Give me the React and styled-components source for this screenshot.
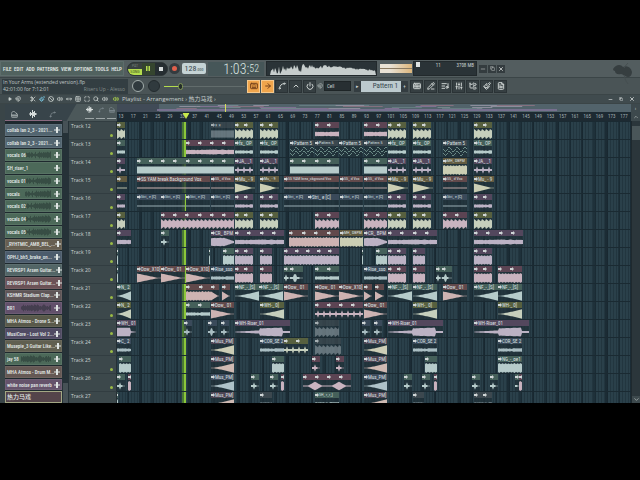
import { useMemo } from 'react';
import styled, { createGlobalStyle } from 'styled-components';
import {
  ArrowRight,
  Ban,
  ChevronDown,
  ChevronUp,
  Copy,
  FileText,
  FolderTree,
  Grid2x2,
  Keyboard,
  KeyboardMusic,
  ListMusic,
  Magnet,
  Maximize,
  Minus,
  MoveHorizontal,
  Paintbrush,
  PencilLine,
  Piano,
  Play,
  Power,
  Scissors,
  Search,
  SlidersVertical,
  Spline,
  Volume2,
  X,
} from 'lucide-react';

const COLORS = {
  chrome: '#4b5557',
  chromeDark: '#3a4548',
  grid: '#2a404a',
  text: '#ccd4d3',
  orange: '#f0a54c',
  lime: '#b4dc4e',
};

const UI_FONT = `'Roboto Condensed', 'Open Sans Condensed', Roboto, 'Noto Sans CJK SC', sans-serif`;

const GlobalStyle = createGlobalStyle`
  * {
    box-sizing: border-box;
  }
  body {
    margin: 0;
    background: #000;
    color: ${COLORS.text};
    font-family: ${UI_FONT};
    font-size: 5px;
    line-height: 8px;
    overflow: hidden;
  }
  button, input, select {
    margin: 0;
    padding: 0;
    border: 0;
    background: none;
    color: inherit;
    font: inherit;
  }
  svg {
    display: block;
    flex: none;
  }
`;

/* ---------- frame ---------- */

const Page = styled.div`
  min-height: 100vh;
  padding: 60px 0;
`;
const Bar = styled.div`
  display: flex;
  align-items: center;
  height: ${(p) => p.$height}px;
  background: ${(p) => p.$bg || COLORS.chrome};
  border-bottom: 1px solid #3b4547;
  white-space: nowrap;
`;
const Spacer = styled.div`
  flex: 1;
`;

/* ---------- top toolbar ---------- */

const Menu = styled.nav`
  display: flex;
  align-items: center;
  justify-content: space-between;
  width: 124px;
  height: 15px;
  padding: 0 1px 0 2px;
  background: #51625f;
  border: 1px solid #5d6d6b;
  font-weight: 500;
  color: #e8efec;
`;
const Transport = styled.div`
  display: flex;
  width: 41px;
  height: 14px;
  margin-left: 3px;
  border-radius: 7px;
  overflow: hidden;
  background: #242b2e;
  border: 1px solid #2f3739;
`;
const ModeSwitch = styled.button`
  width: 14px;
  display: flex;
  flex-direction: column;
  font-size: 4px;
  line-height: 6px;
  background: #39413f;
  color: #727b76;
`;
const SongLabel = styled.span`
  background: ${COLORS.lime};
  color: #3c4e25;
`;
const TransportButton = styled.button`
  flex: 1;
  display: flex;
  align-items: center;
  justify-content: center;
  background: ${(p) => (p.$active ? '#35452f' : '#262e32')};
  color: ${(p) => (p.$active ? COLORS.lime : '#d6dbdc')};
`;
const RecordButton = styled.button`
  width: 11px;
  height: 11px;
  margin: 0 2px 0 1px;
  border-radius: 50%;
  background: #e0604c;
  border: 3px solid #343b3f;
`;
const Tempo = styled.output`
  width: 24px;
  height: 11px;
  background: #c5d3d5;
  border-radius: 2px;
  color: #36464b;
  font-size: 8px;
  line-height: 11px;
  text-align: center;
  small {
    font-size: 4px;
  }
`;
const Clock = styled.output`
  width: 56px;
  height: 14px;
  margin: 0 2px;
  padding-right: 5px;
  background: #465658;
  display: flex;
  justify-content: flex-end;
  align-items: center;
  color: #dde6e2;
  font-size: 14px;
  font-weight: 300;
  small {
    font-size: 10px;
  }
`;
const Display = styled.div`
  width: ${(p) => p.$width}px;
  height: 15px;
  margin-right: 2px;
  background: #2a3337;
  border: 1px solid #22292c;
`;
const Meter = styled.div`
  width: 32px;
  height: 9px;
  margin: 0 1px;
  display: flex;
  flex-direction: column;
  gap: 1px;
  background: #8b7b62;
`;
const MeterBar = styled.div`
  flex: 1;
  background: linear-gradient(90deg, #e9e2d5 30%, #dcb67c);
`;
const Cpu = styled(Display)`
  display: flex;
  justify-content: space-between;
  padding: 0 2px;
  line-height: 7px;
`;
const WindowButton = styled.button`
  width: 8px;
  height: 8px;
  margin-right: ${(p) => (p.$plain ? 0 : 1)}px;
  display: flex;
  align-items: center;
  justify-content: center;
  background: ${(p) => (p.$plain ? 'none' : '#343c3f')};
  color: #dde1e0;
`;
const HintPanel = styled.div`
  width: 126px;
  height: 15px;
  margin-left: 2px;
  padding: 0 3px 0 1px;
  background: #333e42;
  color: #c0c8c7;
  font: 5px/7px 'Open Sans', sans-serif;
`;
const HintLine = styled.div`
  display: flex;
  justify-content: space-between;
  em {
    font-style: normal;
    color: #838d8c;
  }
`;
const Knob = styled.button`
  width: 12px;
  height: 12px;
  margin-left: 4px;
  border-radius: 50%;
  background: #303a3e;
  border: 1px solid ${(p) => (p.$lit ? '#a2adab' : '#232b2e')};
`;
const Pitch = styled.input`
  appearance: none;
  width: 81px;
  height: 12px;
  margin: 0 2px 0 4px;
  background: linear-gradient(90deg, ${COLORS.lime} 14px, #626c6c 14px) center / 100% 1px no-repeat;
  &::-webkit-slider-thumb {
    appearance: none;
    width: 5px;
    height: 7px;
    border-radius: 3px;
    background: #242d29;
    border: 1px solid #7f9557;
  }
`;
const ToolButton = styled.button`
  width: 13px;
  height: 13px;
  margin-right: 1px;
  display: flex;
  align-items: center;
  justify-content: center;
  background: ${(p) => (p.$on ? COLORS.orange : '#363f42')};
  border: 1px solid ${(p) => (p.$on ? '#f7c98c' : '#2b3336')};
  color: ${(p) => (p.$on ? '#73401a' : '#ccd2d1')};
`;
const SnapSelect = styled.select`
  appearance: none;
  width: 27px;
  height: 10px;
  margin: 0 3px 0 1px;
  padding-left: 2px;
  background: #272f32;
  border: 1px solid #1e2527;
`;
const PatternSelect = styled.select`
  appearance: none;
  width: 40px;
  height: 11px;
  padding: 0 3px 0 2px;
  background: #bccace;
  color: #33444a;
  font-size: 7px;
  text-align-last: right;
`;
const PatternStep = styled.button`
  width: 7px;
  height: 11px;
  background: #343d41;
`;
const Windows = styled.div`
  display: flex;
  margin-left: 2px;
`;
const Logo = styled.svg`
  position: relative;
  z-index: 1;
  width: 24px;
  height: 28px;
  margin: 3px 6px 0 0;
  align-self: flex-start;
  fill: #363e40;
`;

/* ---------- playlist ---------- */

const TitleBar = styled(Bar)`
  gap: 3px;
  padding: 0 4px 0 8px;
  color: #c9d0ce;
  svg {
    stroke-width: 3;
  }
`;
const ToolGroup = styled.div`
  display: flex;
  gap: 3px;
  margin: 0 2px 0 6px;
`;
const Title = styled.h1`
  margin: 0;
  font: 400 6px/8px 'Open Sans', 'Noto Sans CJK SC', sans-serif;
`;
const Workspace = styled.main`
  display: grid;
  grid-template-columns: 57px 7px 48px minmax(0, 1fr) 9px;
  grid-template-rows: 8px 9px auto;
  padding-left: 5px;
  background: ${COLORS.chromeDark};
`;
const PickerTabs = styled.div`
  grid-row: 1 / 3;
  display: flex;
  align-items: center;
  justify-content: space-around;
  padding-top: 4px;
  background: #38444a;
  border-bottom: 1px solid #8b6b80;
`;
const TrackTools = styled.div`
  grid-row: 1 / 3;
  grid-column: 2 / 4;
  display: grid;
  grid-template-columns: repeat(3, 11px);
  align-items: center;
  justify-content: end;
  padding-left: 12px;
  background: linear-gradient(120deg, #38444a 12px, #4c585a 13px);
  svg {
    justify-self: center;
  }
`;
const Slider = styled.i`
  height: 1px;
  background: #9da6a6;
  margin: 0 1px;
`;
const ScrollCap = styled.button`
  display: flex;
  align-items: center;
  justify-content: center;
  background: #3d494d;
`;
const Ruler = styled.div`
  position: relative;
  background: #1d2a32;
  overflow: hidden;
`;
const BarNumber = styled.span`
  position: absolute;
  top: 1px;
  transform: translateX(-50%);
  line-height: 7px;
  color: #a5b1b5;
`;
const Marker = styled.svg`
  position: absolute;
  top: 1px;
  transform: translateX(-50%);
  fill: #c9ea4c;
`;
const Picker = styled.div`
  display: flex;
  flex-direction: column;
  gap: 1px;
  padding-top: 3px;
  background: #1e292e;
`;
const PickerItem = styled.button`
  position: relative;
  flex: 1;
  min-height: 0;
  display: flex;
  align-items: center;
  padding: 0 1px;
  background: ${(p) => p.$color};
  border: 1px solid ${(p) => (p.$selected ? '#a3a784' : 'rgba(255, 255, 255, 0.07)')};
  color: #e2e9e7;
  text-align: left;
  font-size: ${(p) => (p.$selected ? 6 : 5)}px;
  font-weight: 500;
`;
const PickerName = styled.span`
  position: relative;
  flex: 1;
  white-space: nowrap;
`;
const PickerWave = styled.svg`
  position: absolute;
  top: 1px;
  right: 10px;
  fill: rgba(25, 36, 38, 0.4);
`;
const PickerScroll = styled.div`
  display: flex;
  flex-direction: column;
  justify-content: space-between;
  align-items: center;
  background: #263238;
  &::before,
  &::after {
    content: '';
    width: 5px;
    height: 12px;
    background: #465156;
  }
  &::after {
    height: 20px;
  }
`;
const TrackHead = styled.div`
  height: ${(p) => p.$height}px;
  padding: 0 3px 0 2px;
  display: flex;
  justify-content: space-between;
  overflow: hidden;
  background: #3c484b;
  border-top: 1px solid #323d41;
  border-right: 1px solid #252f34;
  font-family: 'Open Sans', sans-serif;
`;
const Led = styled.i`
  width: 3px;
  height: 3px;
  margin-top: 12px;
  border-radius: 50%;
  background: #9aba45;
`;
const Lanes = styled.div`
  position: relative;
  overflow: hidden;
  background:
    repeating-linear-gradient(90deg, transparent 0 4.3%, rgba(20, 33, 41, 0.3) 4.3% 4.775%),
    repeating-linear-gradient(90deg, transparent 0 1.9%, rgba(13, 26, 34, 0.4) 1.9% 2.3875%),
    repeating-linear-gradient(90deg, transparent 0 0.4%, rgba(16, 30, 38, 0.3) 0.4% 0.5969%),
    ${COLORS.grid};
`;
const Playhead = styled.div`
  position: absolute;
  top: 0;
  bottom: 0;
  width: 4px;
  background: linear-gradient(90deg, #4b7a35 50%, #8cc63b 50%);
`;
const Lane = styled.div`
  position: relative;
  height: ${(p) => p.$height}px;
  border-top: 1px solid #1a2a32;
  overflow: hidden;
`;
const Clip = styled.div`
  position: absolute;
  top: 0;
  height: 17px;
  background: rgba(33, 49, 58, 0.75);
  opacity: ${(p) => (p.$muted ? 0.75 : 1)};
  overflow: hidden;
`;
const ClipHead = styled.div`
  display: flex;
  height: 6px;
  background: ${(p) => p.$color};
  font-size: ${(p) => (p.$tight ? 4 : 5)}px;
  line-height: 6px;
  color: #dde1e3;
  white-space: nowrap;
`;
const ClipMark = styled.span`
  flex: ${(p) => (p.$fixed ? 'none' : 1)};
  min-width: 0;
  padding: 1px 0;
`;
const Wave = styled.svg`
  width: 100%;
  height: 11px;
  fill: ${(p) => p.$color};
`;
const OverviewStrip = styled.svg`
  width: 100%;
  height: 8px;
`;
const VScroll = styled.div`
  display: flex;
  flex-direction: column;
  justify-content: space-between;
  background: #2b363b;
  border-left: 1px solid #1f292e;
`;
const VThumb = styled.div`
  height: 14px;
  margin-top: 5px;
  background: #4a5659;
`;

/* ---------- data ---------- */

// Timeline units visible in the window, one bar is about 3.07 of them
const ORIGIN = 117;
const SPAN = 514;
const toPercent = (x) => `${((x - ORIGIN) / SPAN) * 100}%`;

const TINTS = {
  pink: ['#5c4453', '#c9b3bf'],
  green: ['#45605a', '#b6cbca'],
  olive: ['#57603f', '#c6cfbc'],
  purple: ['#53475d', '#bcb2c4'],
  red: ['#61494b', '#cdb3b2'],
  slate: ['#3a4a5a', '#a9bdc2'],
  sand: ['#625b41', '#cbceb4'],
  gray: ['#3c484f', '#7b8990'],
  cream: ['#4c4452', '#cccdb6'],
  peach: ['#4c4452', '#ceb9b2'],
  ice: ['#3f4c5d', '#aec2c8'],
};

// [start, end, tint, wave, label, muted]
const groups = (ends, tint, wave, label) => ends.map(([a, b]) => [a, b, tint, wave, label]);
const DROPS = [[235, 253], [260, 278], [388, 406], [413, 431], [474, 492]];

const TRACKS = [
  [
    [117, 125, 'olive', 'beats'],
    [211, 234, 'gray', 'block', '× ×', true],
    ...groups(DROPS, 'olive', 'beats'),
    ...groups([[315, 339], [364, 387]], 'pink', 'mid'),
  ],
  [
    [117, 125, 'green', 'small'],
    [186, 234, 'pink', 'mid'],
    ...groups(DROPS, 'green', 'small', 'fx_ OP'),
    ...groups([[290, 314], [315, 338], [339, 363], [364, 387], [443, 467]], 'gray', 'notes', 'Pattern 5'),
  ],
  [
    [117, 125, 'purple', 'hits'],
    ...groups([[137, 234], [290, 339], [364, 387]], 'green', 'block'),
    ...groups(DROPS, 'purple', 'hits', 'JA_ _1'),
    [443, 467, 'sand', 'full', 'MH_ DBPM'],
  ],
  [
    [117, 127, 'sand', 'line'],
    [137, 210, 'red', 'line', 'SS YAM break Background Vox'],
    [284, 339, 'red', 'line', 'SS YAM brea_ckground Vox'],
    ...groups([[211, 234], [340, 363], [364, 387], [443, 467]], 'red', 'line', 'SS_ d Vox'),
    ...groups([[235, 255], [260, 279], [388, 408], [413, 433], [474, 494]], 'sand', 'fall', 'Mu_ - 9'),
  ],
  [
    [117, 125, 'purple', 'small'],
    ...groups(
      [[137, 161], [161, 185], [186, 210], [211, 234], [284, 308], [308, 339], [340, 363], [364, 387], [443, 467]],
      'slate',
      'line',
      'Stri_ e [C]'
    ),
    ...groups(DROPS, 'purple', 'small'),
  ],
  [
    [117, 125, 'olive', 'beats'],
    [161, 234, 'pink', 'beats'],
    ...groups([[315, 339], [364, 387], [443, 467]], 'pink', 'beats'),
    ...groups(DROPS, 'olive', 'beats'),
  ],
  [
    [117, 131, 'purple', 'mid'],
    [161, 169, 'green', 'hit'],
    ...groups([[211, 234], [364, 387]], 'purple', 'taper', 'CR_ BPM'),
    ...groups([[235, 284], [388, 437], [474, 523]], 'purple', 'mid'),
    [289, 339, 'red', 'full'],
    [340, 363, 'sand', 'full', 'MH_ DBPM'],
  ],
  [
    [117, 118, 'green', 'full'],
    [209, 210, 'green', 'full'],
    [223, 234, 'green', 'full'],
    ...groups([[235, 253], [260, 272], [388, 406], [413, 425], [474, 492]], 'purple', 'full'),
    [284, 339, 'purple', 'full'],
    [362, 363, 'green', 'full'],
    [376, 387, 'green', 'full'],
  ],
  [
    [117, 118, 'green', 'full'],
    ...groups([[137, 161], [186, 210]], 'red', 'fall', 'Dow_X10]'),
    [161, 185, 'red', 'fall', 'Dow_ 01'],
    ...groups([[211, 234], [364, 387]], 'slate', 'small', 'Rise_sso'),
    ...groups([[235, 253], [260, 272], [388, 406], [413, 425], [474, 492], [498, 522]], 'pink', 'full'),
    ...groups([[284, 290], [290, 303], [436, 442], [442, 452]], 'green', 'hit'),
    [315, 339, 'green', 'small'],
  ],
  [
    [117, 131, 'green', 'rise', 'N_ 2'],
    [186, 211, 'red', 'full'],
    ...groups([[211, 219], [222, 230], [364, 372], [375, 384]], 'red', 'fall'),
    ...groups([[235, 259], [259, 283], [388, 412], [413, 437], [474, 498], [498, 522]], 'green', 'rise', 'NF_-_[S]'),
    ...groups([[284, 308], [315, 339], [443, 467]], 'red', 'fall', 'Dow_ 01'),
    [339, 363, 'red', 'fall', 'Dow_X10]'],
  ],
  [
    [117, 131, 'olive', 'rise', 'N_ 2'],
    [186, 210, 'green', 'small'],
    ...groups([[211, 234], [364, 387]], 'red', 'fall', 'Dow_ 01'),
    ...groups([[260, 284], [413, 437], [498, 522]], 'olive', 'rise', 'WH-_ 0]'),
    [315, 363, 'pink', 'hits'],
  ],
  [
    [117, 136, 'purple', 'tail', 'WH_ 01'],
    ...groups([[184, 192], [208, 217], [221, 229], [362, 370], [374, 382]], 'slate', 'hit'),
    ...groups([[235, 290], [388, 443], [474, 529]], 'purple', 'riser', 'WH-Riser_01'),
    [315, 339, 'gray', 'beats', '', true],
  ],
  [
    [117, 131, 'slate', 'small', 'C_ 2'],
    ...groups([[211, 234], [364, 387]], 'cream', 'rise', 'Mus_PM]'),
    ...groups([[260, 284], [413, 437], [498, 522]], 'slate', 'small', 'COR_SE 2'),
    [284, 308, 'olive', 'hits'],
    [315, 341, 'gray', 'beats', '', true],
  ],
  [
    [119, 131, 'green', 'full'],
    ...groups([[211, 234], [364, 387]], 'peach', 'rise', 'Mus_PM]'),
    ...groups([[272, 284], [425, 437]], 'green', 'full'),
    ...groups([[312, 320], [336, 344]], 'pink', 'hit'),
    [498, 522, 'green', 'full', 'NG_-_oe1'],
  ],
  [
    ...groups([[117, 125], [251, 259], [270, 278], [404, 412], [422, 430], [472, 480], [490, 498], [515, 519]], 'green', 'hit'),
    ...groups([[128, 131], [281, 284], [434, 437], [519, 522]], 'pink', 'full'),
    ...groups([[211, 234], [364, 387]], 'ice', 'rise', 'Mus_PM]'),
    ...groups([[303, 327], [327, 351]], 'pink', 'diamond'),
  ],
  [
    [117, 118, 'green', 'full'],
    ...groups([[211, 234], [364, 387]], 'peach', 'rise', 'Mus_PM]'),
    ...groups([[260, 272], [413, 424], [474, 492]], 'gray', 'small'),
    [315, 339, 'green', 'small', 'SH_ r_r_]'],
  ],
];

const SLATE = '#526570';
const GREEN = '#4c6959';
const PICKER = [
  ['collab lan 2_3 - 2021...', SLATE],
  ['collab lan 2_3 - 2021...', SLATE],
  ['vocals 06', GREEN, 26],
  ['SH_riser_1', GREEN],
  ['vocals 01', GREEN, 26],
  ['vocals', GREEN, 26],
  ['vocals 02', GREEN, 26],
  ['vocals 04', GREEN, 26],
  ['vocals 05', GREEN, 26],
  ['_RYHTMIC_AMB_BEL_...', '#675f51'],
  ['OPHJ_bh5_brake_on...', '#4c5c6c'],
  ['REVRSP1 Arsen Guitar...', '#526566'],
  ['REVRSP1 Arsen Guitar...', '#6b5257'],
  ['KSHMR Stadium Clap...', '#5f5557'],
  ['BR1', '#62506b', 30],
  ['MHA Atmos - Drone S...', '#59594a'],
  ['MusiCore - Lost Vol 2...', '#504b63'],
  ['Musepie_3 Guitar Like...', '#605f50'],
  ['jay 58', GREEN, 30],
  ['MHA Atmos - Drum M...', '#655854'],
  ['white noise pan reverb', '#65536b'],
  ['热力马戏', '#54444a'],
];

/* ---------- drawing helpers ---------- */

const noise = (i) => Math.abs(Math.sin(i * 12.9898) * 43758.5453) % 1;

const ENVELOPES = {
  full: (t, x) => (x % 3 === 0 ? 0.75 : 0.88 + noise(x) * 0.12),
  block: () => 0.72,
  mid: (t, x) => 0.36 + noise(x) * 0.14,
  small: (t, x) => 0.22 + noise(x) * 0.18,
  line: () => 0.09,
  beats: (t, x) => 1 - (x % 4) * 0.15,
  hits: (t, x) => (x % 6 === 3 ? 0.75 : 0.18),
  fall: (t) => Math.max(0.05, 0.9 * (1 - t * 1.1)),
  rise: (t) => Math.max(0.04, 0.95 * t ** 1.3),
  taper: (t) => (t < 0.55 ? 0.75 + noise(t * 50) * 0.1 : 0.85 - (t - 0.55) * 1.5),
  hit: (t) => (t > 0.25 && t < 0.5 ? 0.75 : t < 0.7 ? 0.22 : 0.06),
  riser: (t, x) => (t < 0.45 ? 0.06 + t * 0.6 : t < 0.86 ? 0.65 + t * 0.3 - noise(x) * 0.08 : 0.18),
  tail: (t) => (t < 0.7 ? 0.85 : 0.5 - t * 0.45),
  diamond: (t) => Math.max(0.08, 0.85 - Math.abs(t - 0.5) * 2.6),
};

const wavePath = (kind, width) => {
  const top = [];
  const bottom = [];
  for (let x = 0; x <= width; x += 1) {
    const a = Math.max(0.04, ENVELOPES[kind](x / width, x)) * 5;
    top.push(`${x},${(6 - a).toFixed(2)}`);
    bottom.unshift(`${x},${(6 + a).toFixed(2)}`);
  }
  return `M${top.join('L')}L${bottom.join('L')}Z`;
};

const notesPath = (width) => {
  let d = '';
  for (let x = 0; x < width; x += 1) {
    const y = Math.round(3 + Math.sin(x * 0.8) * 2);
    d += `M${x},${y}h1v1h-1zM${x},${y + 4}h1v1h-1z`;
  }
  return d;
};

// rough text width, capitals run wider
const labelWidth = (label) => label.length * 2.1 + label.replace(/[^A-Z]/g, '').length * 0.6;

const Arrow = () => (
  <svg width="4" height="4" viewBox="0 0 4 4" fill="#cfd5d6">
    <path d="M0 1h2V0l2 2-2 2V3H0z" />
  </svg>
);

const AudioClip = ({ start, end, tint, wave, label, muted }) => {
  const [head, body] = TINTS[tint];
  const width = end - start;
  const marks = Math.max(1, Math.round(width / 12));
  const tight = label && labelWidth(label) + 4 > width;
  return (
    <Clip $muted={muted} style={{ left: toPercent(start), width: `${(width / SPAN) * 100}%` }}>
      <ClipHead $color={head} $tight={tight}>
        {label === undefined ? (
          Array.from({ length: marks }, (_, i) => (
            <ClipMark key={i}>
              <Arrow />
            </ClipMark>
          ))
        ) : (
          <>
            <ClipMark $fixed>
              <Arrow />
            </ClipMark>
            {label}
          </>
        )}
      </ClipHead>
      <Wave viewBox={`0 0 ${width} 11`} preserveAspectRatio="none" $color={wave === 'notes' ? '#6a8985' : body}>
        <path d={wave === 'notes' ? notesPath(width) : wavePath(wave, width)} />
      </Wave>
    </Clip>
  );
};

const PlusWave = () => (
  <svg width="6" height="6" viewBox="0 0 6 6" fill="#dfe5e3">
    <path d="M0 2.500h2V0h2v2.500h2v1H4V6H2V3.500H0z" />
  </svg>
);

const Waveform = ({ size, color = '#d5dbda' }) => (
  <svg width={size} height={size} viewBox="0 0 8 8" fill={color}>
    <path d="M0 3.500h1V2h1v1h1V0h1v2h1V1h1v2h1v.5h1v1H7V5H6v2H5V6H4v2H3V5H2v1H1V4.500H0z" />
  </svg>
);

const ClipPicker = () => (
  <Picker>
    {PICKER.map(([name, color, wave], i) => (
      <PickerItem key={i} $color={color} $selected={i === PICKER.length - 1}>
        {wave && (
          <PickerWave width={wave} height="8" viewBox={`0 0 ${wave} 8`}>
            {Array.from({ length: wave }, (_, x) => {
              const h = 2 + noise(x + i) * 5;
              return <rect key={x} x={x} y={4 - h / 2} width="1" height={h} />;
            })}
          </PickerWave>
        )}
        <PickerName>{name}</PickerName>
        {i < PICKER.length - 1 && <PlusWave />}
      </PickerItem>
    ))}
  </Picker>
);

const Spectrum = () => {
  const d = useMemo(() => {
    let path = 'M0,13L3,13';
    for (let x = 4; x < 109; x += 1) {
      const peak = x < 35 ? 1 + noise(x) * 9 : x < 60 ? 6 + noise(x) * 5 : 8 - (x - 60) / 10 + noise(x) * 2;
      path += `L${x},${(13 - peak).toFixed(1)}`;
    }
    return `${path}L109,13Z`;
  }, []);
  return (
    <svg width="109" height="13" viewBox="0 0 109 13" fill="#c6cdcc">
      <path d={d} />
    </svg>
  );
};

const Overview = () => {
  const tints = ['#7f7191', '#8c8d9b', '#84707f', '#657c80', '#73858b'];
  return (
    <OverviewStrip viewBox="0 0 514 8" preserveAspectRatio="none">
      <rect width="514" height="8" fill="#52636b" />
      <rect width="42" height="8" fill="#414b57" />
      {Array.from({ length: 60 }, (_, i) => (
        <rect
          key={i}
          x={40 + noise(i) * 340}
          y={1 + Math.floor(noise(i + 90) * 6)}
          width={10 + noise(i + 30) * 36}
          height="1"
          fill={tints[i % 5]}
        />
      ))}
      <rect x="40" y="5" width="400" height="2" fill="#77708f" />
      <rect x="108" width="1" height="8" fill="#d7df59" />
    </OverviewStrip>
  );
};

const MENU = ['FILE', 'EDIT', 'ADD', 'PATTERNS', 'VIEW', 'OPTIONS', 'TOOLS', 'HELP'];
const MODES = [
  ['Typing keyboard', Keyboard, true],
  ['Step', ArrowRight, true],
  ['Slide', Spline],
  ['Blend', ChevronUp],
  ['Metronome', Power],
];
const WINDOWS = [
  ['Render', KeyboardMusic],
  ['Playlist', PencilLine],
  ['Channel rack', ListMusic],
  ['Mixer', SlidersVertical],
  ['Browser', FolderTree],
  ['Plugins', Paintbrush],
  ['Notes', FileText],
];
const TOOLS = [Scissors, Paintbrush, Ban, Volume2, MoveHorizontal, Grid2x2, Maximize, Search, Volume2];

const laneHeight = (i) => (i === TRACKS.length - 1 ? 12 : 18);

const App = () => (
  <Page>
    <GlobalStyle />
    <Bar $height={18} $bg="#535d5f">
      <Menu>
        {MENU.map((item) => (
          <button key={item}>{item}</button>
        ))}
      </Menu>
      <Transport>
        <ModeSwitch>
          <span>PAT</span>
          <SongLabel>SONG</SongLabel>
        </ModeSwitch>
        <TransportButton $active aria-label="Pause">
          <svg width="4" height="5" fill="currentColor">
            <path d="M0 0h1.500v5H0zM2.500 0H4v5H2.500z" />
          </svg>
        </TransportButton>
        <TransportButton aria-label="Stop">
          <svg width="4" height="4" fill="currentColor">
            <rect width="4" height="4" />
          </svg>
        </TransportButton>
      </Transport>
      <RecordButton aria-label="Record" />
      <Tempo>
        128<small>.000</small>
      </Tempo>
      <Clock>
        1:03:<small>52</small>
      </Clock>
      <Display $width={111}>
        <Spectrum />
      </Display>
      <Meter>
        <MeterBar />
        <MeterBar />
      </Meter>
      <Cpu $width={64}>
        <svg width="4" height="6">
          <rect width="4" height="5" fill="#dde2e1" />
        </svg>
        <span>11</span>
        <span>3708 MB</span>
      </Cpu>
      <WindowButton aria-label="Minimize">
        <Minus size={6} />
      </WindowButton>
      <WindowButton aria-label="Restore">
        <Copy size={5} />
      </WindowButton>
      <WindowButton aria-label="Close">
        <X size={6} strokeWidth={3} />
      </WindowButton>
      <Spacer />
      <Logo viewBox="0 0 24 28">
        <path d="M3 6C6 1 11 1 13 4c4-2 8 0 9 5 0 3-2 5-4 5-3 0-5-3-7-3-4 1-6-1-6-3-1 0-2-1-2-2z" />
        <path d="M14 5C16 2 17 1 18 0M14 12c1 3 1 5 4 9" fill="none" stroke="#454e50" />
      </Logo>
    </Bar>

    <Bar $height={17} $bg="#4a5456">
      <HintPanel>
        <HintLine>In Your Arms (extended version).flp</HintLine>
        <HintLine>
          <span>42:01:00 for 7:12:01</span>
          <em>Risers Up - Alesso</em>
        </HintLine>
      </HintPanel>
      <Knob $lit aria-label="Volume" />
      <Knob aria-label="Swing" />
      <Pitch type="range" aria-label="Pitch" min="0" max="100" defaultValue="18" />
      {MODES.map(([name, Icon, on]) => (
        <ToolButton key={name} aria-label={name} $on={on}>
          <Icon size={8} strokeWidth={3} />
        </ToolButton>
      ))}
      <Magnet size={6} />
      <SnapSelect aria-label="Snap">
        <option>Cell</option>
      </SnapSelect>
      <PatternStep aria-label="Previous pattern">▸</PatternStep>
      <PatternSelect aria-label="Pattern">
        <option>Pattern 1</option>
      </PatternSelect>
      <PatternStep aria-label="Add pattern">+</PatternStep>
      <Windows>
        {WINDOWS.map(([name, Icon]) => (
          <ToolButton key={name} aria-label={name}>
            <Icon size={8} strokeWidth={3} />
          </ToolButton>
        ))}
      </Windows>
    </Bar>

    <TitleBar $height={9} $bg="#404b4e">
      <Play size={4} fill="currentColor" />
      <Magnet size={6} />
      <ToolGroup>
        {TOOLS.map((Icon, i) => (
          <Icon key={i} size={6} color={i === 1 ? '#79c5e0' : 'currentColor'} />
        ))}
      </ToolGroup>
      <Volume2 size={6} color={COLORS.lime} />
      <Title>Playlist - Arrangement › 热力马戏 ›</Title>
      <Spacer />
      <WindowButton $plain aria-label="Minimize playlist">
        <Minus size={5} />
      </WindowButton>
      <WindowButton $plain aria-label="Restore playlist">
        <Copy size={4} />
      </WindowButton>
      <WindowButton $plain aria-label="Close playlist">
        <X size={6} />
      </WindowButton>
    </TitleBar>

    <Workspace>
      <PickerTabs>
        <Piano size={7} />
        <Waveform size={8} />
        <Spline size={7} color="#89949a" />
      </PickerTabs>
      <TrackTools>
        <Waveform size={7} />
        <Spline size={6} color="#89949a" />
        <Piano size={6} color="#89949a" />
        <Slider />
        <Slider />
        <Slider />
      </TrackTools>
      <Overview />
      <ScrollCap aria-label="Scroll right">›</ScrollCap>
      <Ruler>
        {Array.from({ length: 42 }, (_, i) => (
          <BarNumber key={i} style={{ left: toPercent(121 + i * 12.27) }}>
            {13 + i * 4}
          </BarNumber>
        ))}
        <Marker width="7" height="6" style={{ left: toPercent(186) }}>
          <path d="M0 0h7L3.500 6z" />
        </Marker>
      </Ruler>
      <ScrollCap aria-label="Scroll up">
        <ChevronUp size={6} />
      </ScrollCap>

      <ClipPicker />
      <PickerScroll />
      <div>
        {TRACKS.map((_, i) => (
          <TrackHead key={i} $height={laneHeight(i)}>
            Track {i + 12}
            <Led />
          </TrackHead>
        ))}
      </div>
      <Lanes>
        <Playhead style={{ left: toPercent(182) }} />
        {TRACKS.map((clips, i) => (
          <Lane key={i} $height={laneHeight(i)}>
            {clips.map(([start, end, tint, wave, label, muted]) => (
              <AudioClip
                key={start}
                start={start}
                end={end}
                tint={tint}
                wave={wave}
                label={label}
                muted={muted}
              />
            ))}
          </Lane>
        ))}
      </Lanes>
      <VScroll>
        <VThumb />
        <ScrollCap aria-label="Scroll down">
          <ChevronDown size={7} />
        </ScrollCap>
      </VScroll>
    </Workspace>
  </Page>
);

export default App;
